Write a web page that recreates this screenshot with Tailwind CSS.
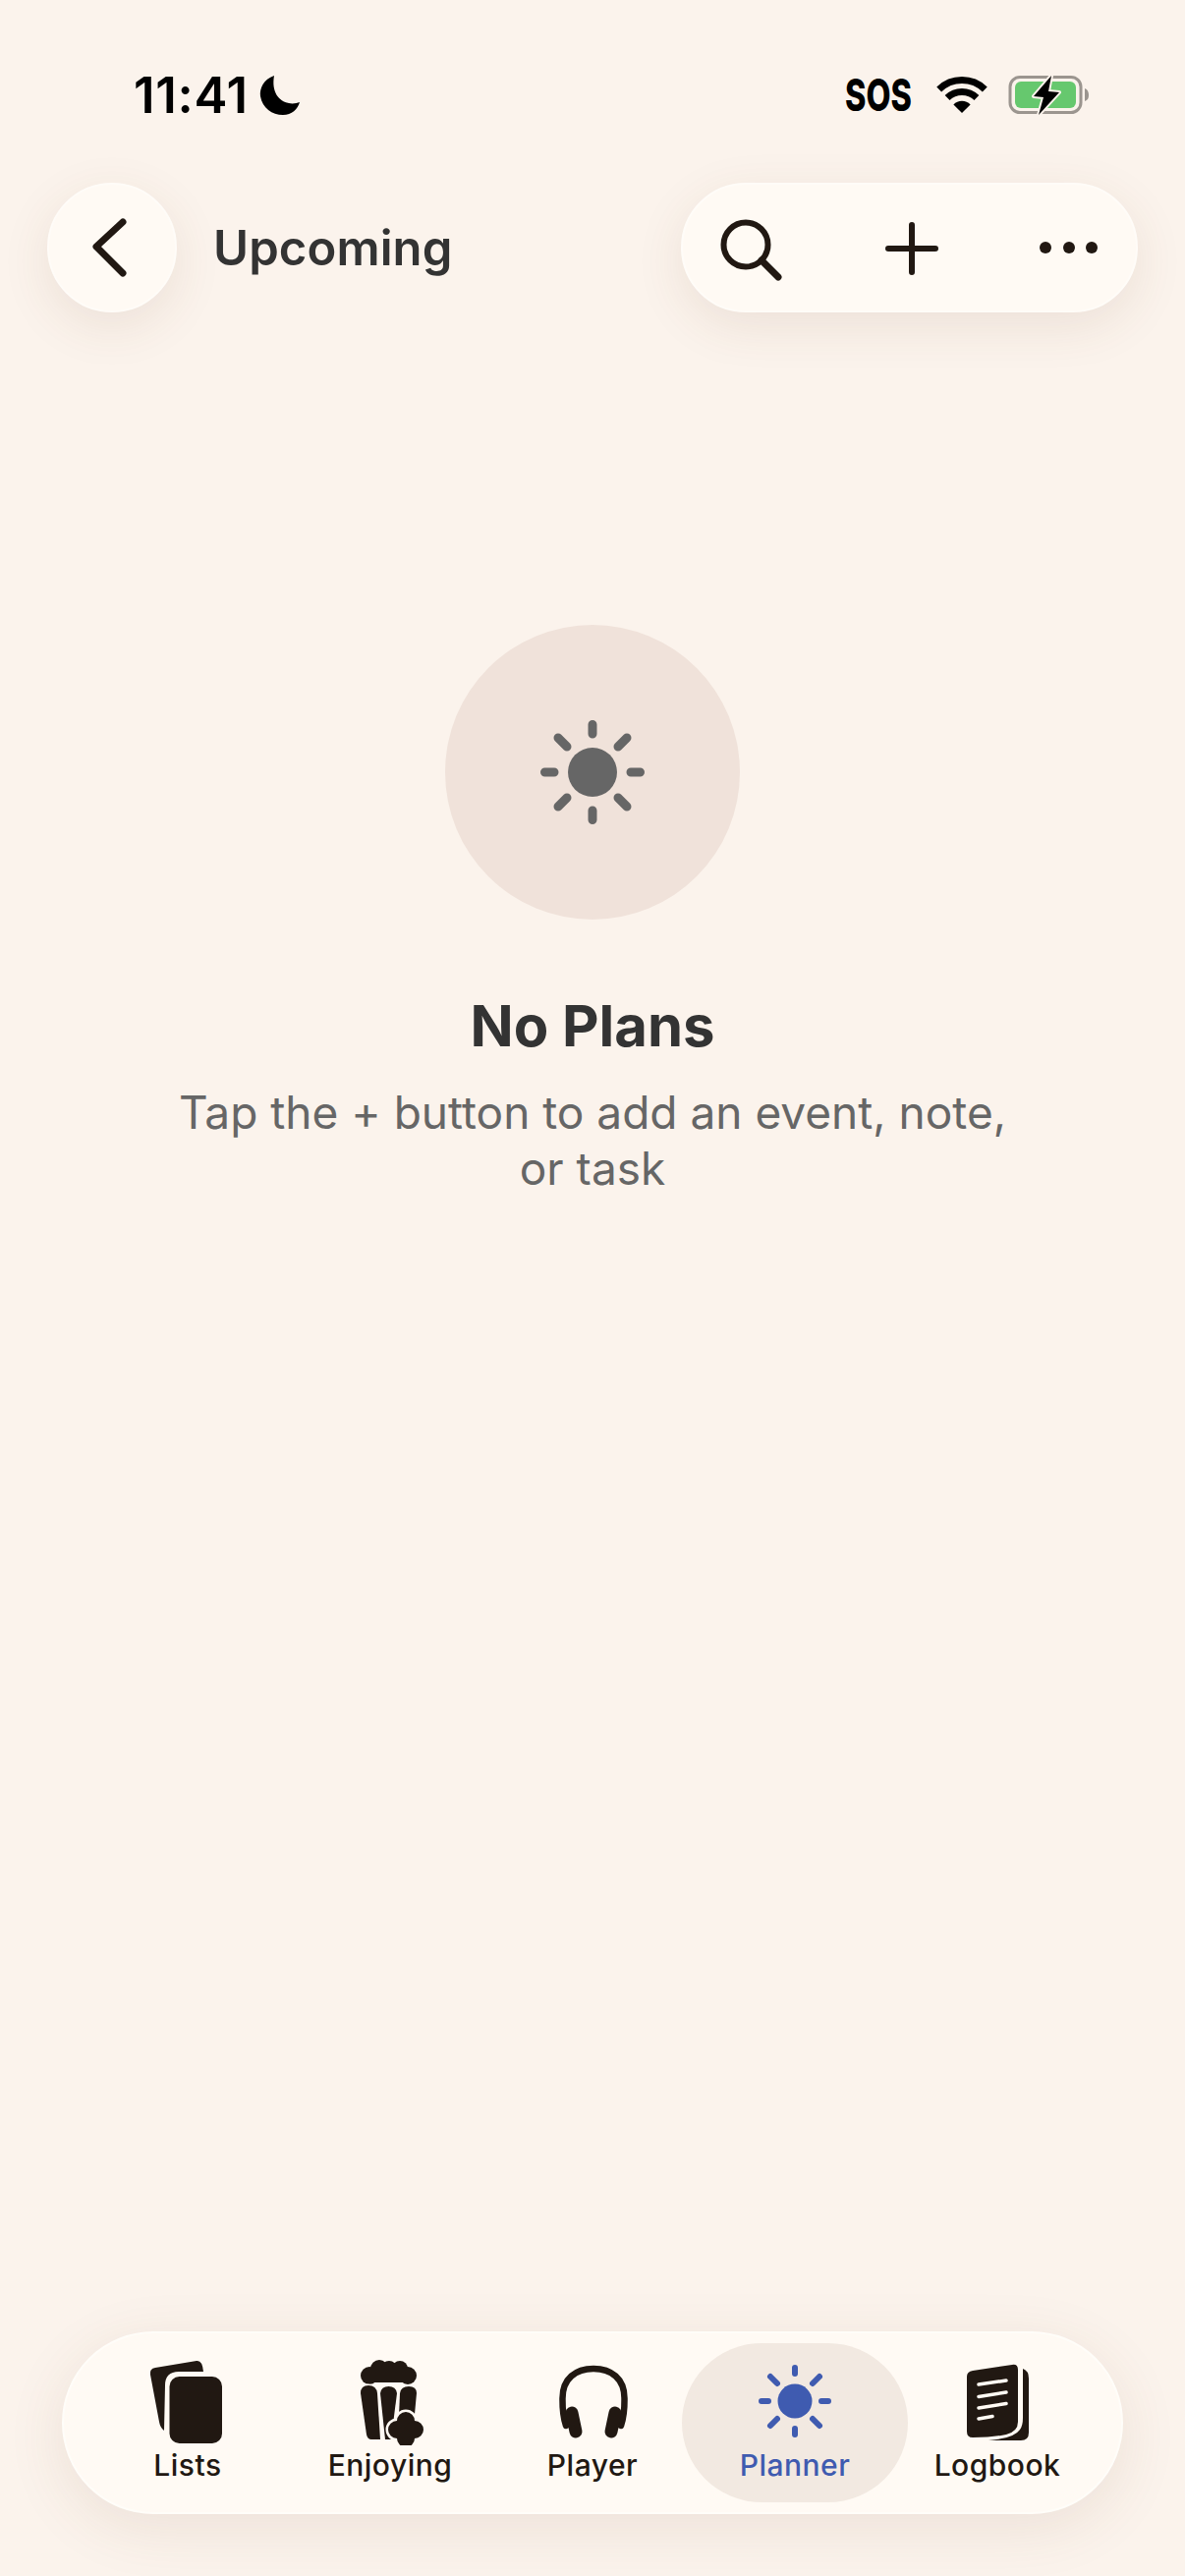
<!DOCTYPE html>
<html lang="en">
<head>
<meta charset="utf-8">
<title>Upcoming</title>
<script src="https://cdn.jsdelivr.net/npm/@tailwindcss/browser@4"></script>
</head>
<body class="bg-[#fbf3ec]">
<div class="w-[1206px] h-[2622px] flex flex-col overflow-hidden font-['Inter',sans-serif] bg-[#fbf3ec]">

    <!-- Status bar -->
    <div class="h-[186px] shrink-0 flex justify-between items-start pt-[72px] pl-[136px] pr-[96px] text-black">
        <div class="flex items-center gap-[11px] h-[50px]">
            <span class="text-[51px] leading-[50px] font-semibold tracking-[0.7px]">11:41</span>
            <svg class="w-[42px] h-[42px]" viewBox="0 0 42 42"><path d="M15 1 C4 5 0 14 1 22 C3 34 13 41 24 41 C33 41 39 35 41 28 C38 29 34 30 30 29 C20 27 12 18 15 1 Z" fill="#000"/></svg>
        </div>
        <div class="flex items-center h-[50px]">
            <span class="w-[66px] text-[45px] leading-[50px] font-extrabold scale-x-[0.72] origin-left whitespace-nowrap">SOS</span>
            <svg class="w-[52px] h-[40px] ml-[27px]" viewBox="0 0 52 40" fill="none">
                <path d="M2.7 13.9 A33.5 33.5 0 0 1 49.3 13.9" stroke="#000" stroke-width="7"/>
                <path d="M11.1 22.5 A21.5 21.5 0 0 1 40.9 22.5" stroke="#000" stroke-width="7"/>
                <path d="M26 38 L17.4 29.4 A12 12 0 0 1 34.6 29.4 Z" fill="#000"/>
            </svg>
            <svg class="w-[84px] h-[44px] ml-[21px]" viewBox="0 0 84 44" fill="none">
                <rect x="2" y="3.500" width="72" height="36" rx="10" stroke="#9b958f" stroke-width="3"/>
                <rect x="7" y="8" width="62" height="27" rx="6" fill="#66c86e"/>
                <path d="M78 15 C81 16 82 19 82 22 C82 25 81 27 78 28 Z" fill="#9b958f"/>
                <path d="M44 2 L26 23 L36 24 L31 42 L52 19 L41 18 Z" fill="#000" stroke="#fbf3ec" stroke-width="4" paint-order="stroke" stroke-linejoin="round"/>
            </svg>
        </div>
    </div>

    <!-- Header -->
    <div class="h-[132px] shrink-0 mx-[48px] flex items-center">
        <button class="w-[132px] h-[132px] rounded-full bg-[#fffaf4] border-2 border-[#fffcf8] shadow-[0_14px_50px_rgba(110,70,40,0.10)] flex items-center justify-center">
            <svg class="w-[44px] h-[64px] mr-[6px]" viewBox="0 0 44 64" fill="none"><path d="M36 7 L9 32 L36 59" transform="translate(0 -1)" stroke="#211812" stroke-width="7" stroke-linecap="round" stroke-linejoin="round"/></svg>
        </button>
        <span class="ml-[37px] mt-[2px] text-[49px] font-[560] text-[#333333] tracking-[0.1px]">Upcoming</span>
        <div class="ml-auto w-[465px] h-[132px] rounded-full bg-[#fffaf4] border-2 border-[#fffcf8] shadow-[0_14px_50px_rgba(110,70,40,0.10)] flex items-center justify-between pl-[38px] pr-[38px]">
            <svg class="w-[64px] h-[64px] mt-[6px]" viewBox="0 0 64 64" fill="none">
                <circle cx="26" cy="26" r="22.5" stroke="#211812" stroke-width="6"/>
                <path d="M42 42 L59 59" stroke="#211812" stroke-width="7" stroke-linecap="round"/>
            </svg>
            <svg class="w-[54px] h-[54px] mt-[2px]" viewBox="0 0 54 54" fill="none"><path d="M27 3 V51 M3 27 H51" stroke="#211812" stroke-width="6" stroke-linecap="round"/></svg>
            <svg class="w-[60px] h-[14px]" viewBox="0 0 60 14" fill="#211812"><circle cx="6" cy="7" r="6"/><circle cx="30" cy="7" r="6"/><circle cx="53" cy="7" r="6"/></svg>
        </div>
    </div>

    <!-- Empty state -->
    <div class="flex-1 flex flex-col items-center pt-[318px]">
        <div class="w-[300px] h-[300px] rounded-full bg-[#f0e2da] flex items-center justify-center">
            <svg class="w-[110px] h-[110px]" viewBox="0 0 110 110" fill="#666666" stroke="#666666" stroke-width="9" stroke-linecap="round">
                <circle cx="55" cy="55" r="25" stroke="none"/>
                <path d="M55 6.500 V16 M55 94 V103.500 M6.500 55 H16 M94 55 H103.500 M20 20 L29 29 M81 81 L90 90 M90 20 L81 29 M29 81 L20 90"/>
            </svg>
        </div>
        <div class="mt-[73px] text-[58px] leading-[70px] font-bold text-[#333333]">No Plans</div>
        <div class="mt-[25px] w-[900px] text-center text-[46px] leading-[57px] text-[#666666]">Tap the + button to add an event, note,<br>or task</div>
    </div>

    <!-- Tab bar -->
    <div class="h-[186px] shrink-0 mx-[63px] mb-[63px] rounded-full bg-[#fffaf4] border-2 border-[#fffdf9] shadow-[0_14px_60px_rgba(110,70,40,0.10)] grid grid-cols-5 px-[23px] py-[10px] text-[#211812]">
        <div class="flex flex-col items-center pt-[12px]">
            <svg class="w-[90px] h-[92px]" viewBox="0 0 90 92" fill="#211812">
                <path d="M12 13 L54 6 Q60 5 61 17 L36 17 Q22 17 22 31 L21 77 Q17 74 16 68 L7 20 Q6 14 12 13 Z"/>
                <rect x="26.500" y="22" width="53.500" height="68" rx="10"/>
            </svg>
            <span class="mt-[3px] text-[30px] leading-[34px] font-[450] tracking-[0.5px]">Lists</span>
        </div>
        <div class="flex flex-col items-center pt-[12px]">
            <svg class="w-[90px] h-[92px]" viewBox="0 0 90 92" fill="#211812">
                <circle cx="24" cy="21" r="9"/><circle cx="34" cy="14" r="9"/><circle cx="44" cy="14" r="8"/><circle cx="55" cy="14" r="8"/><circle cx="63" cy="21" r="9"/>
                <rect x="24" y="14" width="40" height="14"/>
                <g stroke="#fffaf4" stroke-width="3" paint-order="stroke">
                    <path d="M15 39 Q15 31 23 31 Q31 31 32 39 L35 86 L26 86 Q22 86 21 81 Z"/>
                    <path d="M35 39 Q36 32 43.500 32 Q51 32 52 39 L46 86 L40 86 Z"/>
                    <path d="M55 39 Q56 32 64 32 Q72 32 72 39 L70 60 L54 62 Z"/>
                </g>
                <path d="M61 58 a9 9 0 0 1 9 9 a9 9 0 0 1 0 18 a9 9 0 0 1 -18 0 a9 9 0 0 1 0 -18 a9 9 0 0 1 9 -9 Z" stroke="#fffaf4" stroke-width="5" paint-order="stroke"/>
            </svg>
            <span class="mt-[3px] text-[30px] leading-[34px] font-[450] tracking-[0.5px]">Enjoying</span>
        </div>
        <div class="flex flex-col items-center pt-[12px]">
            <svg class="w-[90px] h-[92px] translate-x-[1px]" viewBox="0 0 90 92" fill="none" stroke="#211812" stroke-linecap="round">
                <path d="M17 72 C13 60 13.500 50 13.500 44 C13.500 24 27 14 45 14 C63 14 76.500 24 76.500 44 C76.500 50 77 60 73 72" stroke-width="6.500"/>
                <path d="M23 59 L27 78 M67 59 L63 78" stroke-width="13"/>
            </svg>
            <span class="mt-[3px] text-[30px] leading-[34px] font-[450] tracking-[0.5px]">Player</span>
        </div>
        <div class="-mx-3 flex flex-col items-center pt-[12px] rounded-[81px] bg-[#f2e9e1] text-[#3f5bb0]">
            <svg class="w-[90px] h-[92px]" viewBox="0 0 90 92" fill="#3f5bb0" stroke="#3f5bb0" stroke-width="6" stroke-linecap="round">
                <circle cx="45" cy="47" r="17.500" stroke="none"/>
                <path d="M45 13 V19 M45 75 V81 M11 47 H18 M72 47 H79 M20 22 L27 29 M63 65 L70 72 M70 22 L63 29 M27 65 L20 72"/>
            </svg>
            <span class="mt-[3px] text-[30px] leading-[34px] tracking-[0.5px] font-medium">Planner</span>
        </div>
        <div class="flex flex-col items-center pt-[12px]">
            <svg class="w-[90px] h-[92px]" viewBox="0 0 90 92" fill="#211812">
                <path d="M20 16 L60 10 Q66 9 66 15 L66 68 Q66 78 54 81 Q40 84 20 84 Q14 84 14 78 L14 22 Q14 17 20 16 Z"/>
                <path d="M71 14 Q77 16 77 24 L77 79 Q77 87 69 87 L36 87 Q62 85 68 76 Q71 72 71 64 Z"/>
                <path d="M26 30 L54 26 M26 42.500 L54 38 M26 54 L54 49.500 M26 65 L40 62.500" stroke="#fffaf4" stroke-width="3.500" stroke-linecap="round" fill="none"/>
            </svg>
            <span class="mt-[3px] text-[30px] leading-[34px] font-[450] tracking-[0.5px]">Logbook</span>
        </div>
    </div>
</div>
</body>
</html>
